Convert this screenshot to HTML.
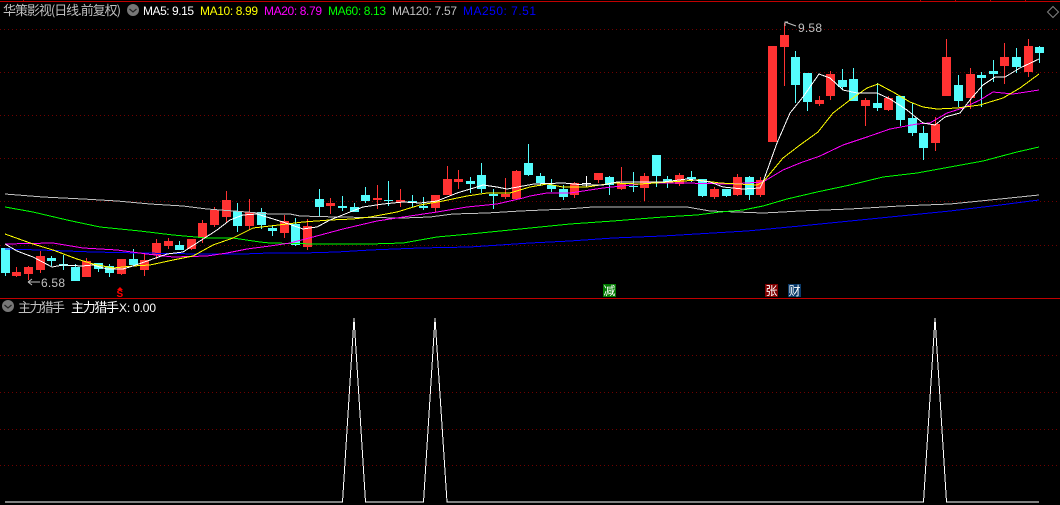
<!DOCTYPE html>
<html lang="zh">
<head>
<meta charset="utf-8">
<title>华策影视</title>
<style>
html,body{margin:0;padding:0;background:#000;width:1060px;height:505px;overflow:hidden}
svg{display:block}
text{font-family:"Liberation Sans","WenQuanYi Zen Hei","Noto Sans CJK SC",sans-serif;font-size:12px}
.cn{font-family:"WenQuanYi Zen Hei","Noto Sans CJK SC",sans-serif;font-size:13px}
.ma{fill:none;stroke-width:1;shape-rendering:crispEdges}
</style>
</head>
<body>
<svg width="1060" height="505" viewBox="0 0 1060 505" xmlns="http://www.w3.org/2000/svg">
<rect width="1060" height="505" fill="#000"/>
<g stroke="#700000" stroke-width="1" stroke-dasharray="1 3" shape-rendering="crispEdges">
<path d="M0 29.5H1060M0 72.5H1060M0 115.5H1060M0 158.5H1060M0 201.5H1060M0 245.5H1060M0 355.5H1060M0 392.5H1060M0 429.5H1060M0 465.5H1060"/>
</g>
<g fill="#c00000" shape-rendering="crispEdges">
<rect x="0" y="1" width="1060" height="1"/>
<rect x="23" y="0" width="1" height="2"/><rect x="920" y="0" width="1" height="2"/><rect x="955" y="0" width="1" height="2"/><rect x="990" y="0" width="1" height="2"/><rect x="1025" y="0" width="1" height="2"/>
<rect x="0" y="298" width="1060" height="1"/>
</g>
<path d="M1053 6.5L1058.5 12L1053 17.5L1047.5 12Z" fill="none" stroke="#808080" stroke-width="1"/>
<path fill="#ff3232" shape-rendering="crispEdges" d="
M12 272h9V276h-9zM16 267h1V277h-1z
M24 267h9V274h-9zM28 266h1V280h-1z
M36 256h9V270h-9zM40 251h1V273h-1z
M82 261h9V277h-9zM86 258h1V277h-1z
M117 259h9V274h-9zM121 259h1V275h-1z
M140 260h9V270h-9zM144 254h1V276h-1z
M152 243h9V255h-9zM156 239h1V259h-1z
M164 241h9V246h-9zM168 238h1V249h-1z
M187 239h9V249h-9zM191 239h1V250h-1z
M198 223h9V238h-9zM202 220h1V243h-1z
M210 210h9V225h-9zM214 207h1V227h-1z
M222 200h9V217h-9zM226 191h1V222h-1z
M245 212h9V226h-9zM249 199h1V230h-1z
M280 221h9V233h-9zM284 215h1V238h-1z
M303 226h9V247h-9zM307 219h1V250h-1z
M326 203h9V206h-9zM330 198h1V214h-1z
M373 198h9V200h-9zM377 185h1V209h-1z
M396 200h9V202h-9zM400 189h1V207h-1z
M431 195h9V208h-9zM435 195h1V212h-1z
M443 179h9V195h-9zM447 166h1V195h-1z
M454 179h9V182h-9zM458 170h1V189h-1z
M501 194h9V197h-9zM505 178h1V199h-1z
M512 171h9V199h-9zM516 170h1V199h-1z
M570 183h9V195h-9zM574 182h1V198h-1z
M594 173h9V180h-9zM598 173h1V183h-1z
M617 183h9V189h-9zM621 167h1V190h-1z
M640 176h9V188h-9zM644 173h1V201h-1z
M675 175h9V184h-9zM679 173h1V186h-1z
M710 189h9V197h-9zM714 187h1V199h-1z
M733 177h9V195h-9zM737 174h1V196h-1z
M756 180h9V195h-9zM760 177h1V197h-1z
M768 46h9V142h-9z
M780 35h9V47h-9zM784 23h1V86h-1z
M815 100h9V104h-9zM819 96h1V106h-1z
M826 74h9V96h-9zM830 71h1V100h-1z
M861 100h9V106h-9zM865 98h1V126h-1z
M884 98h9V110h-9zM888 96h1V111h-1z
M931 124h9V143h-9zM935 117h1V151h-1z
M942 57h9V96h-9zM946 39h1V96h-1z
M966 74h9V98h-9zM970 68h1V109h-1z
M1000 57h9V66h-9zM1004 43h1V84h-1z
M1024 46h9V72h-9zM1028 39h1V77h-1z"/>
<path fill="#54fcfc" shape-rendering="crispEdges" d="
M1 248h9V273h-9zM5 248h1V276h-1z
M47 258h9V261h-9zM51 256h1V266h-1z
M59 264h9V266h-9zM63 255h1V270h-1z
M71 267h9V281h-9zM75 264h1V281h-1z
M94 263h9V269h-9zM98 263h1V272h-1z
M105 266h9V273h-9zM109 264h1V277h-1z
M129 259h9V265h-9zM133 249h1V266h-1z
M175 245h9V250h-9zM179 241h1V250h-1z
M233 211h9V226h-9zM237 203h1V232h-1z
M257 212h9V225h-9zM261 208h1V229h-1z
M268 228h9V231h-9zM272 225h1V236h-1z
M291 224h9V245h-9zM295 218h1V246h-1z
M315 199h9V207h-9zM319 189h1V217h-1z
M338 206h9V208h-9zM342 196h1V211h-1z
M350 207h9V212h-9zM354 203h1V212h-1z
M361 195h9V201h-9zM365 187h1V203h-1z
M384 200h9V201h-9zM388 181h1V206h-1z
M408 201h9V203h-9zM412 195h1V207h-1z
M419 206h9V208h-9zM423 197h1V210h-1z
M466 181h9V184h-9zM470 177h1V193h-1z
M477 175h9V189h-9zM481 163h1V193h-1z
M489 194h9V196h-9zM493 189h1V209h-1z
M524 163h9V175h-9zM528 144h1V176h-1z
M536 176h9V183h-9zM540 173h1V186h-1z
M547 185h9V189h-9zM551 179h1V192h-1z
M559 189h9V197h-9zM563 185h1V200h-1z
M605 177h9V185h-9zM609 176h1V195h-1z
M629 186h9V187h-9zM633 172h1V192h-1z
M652 155h9V176h-9zM656 155h1V187h-1z
M663 179h9V183h-9zM667 176h1V188h-1z
M687 177h9V179h-9zM691 171h1V182h-1z
M698 179h9V196h-9zM702 179h1V197h-1z
M722 189h9V196h-9zM726 189h1V197h-1z
M745 177h9V195h-9zM749 176h1V200h-1z
M791 57h9V85h-9zM795 51h1V103h-1z
M803 73h9V102h-9zM807 73h1V111h-1z
M838 80h9V87h-9zM842 69h1V90h-1z
M849 79h9V101h-9zM853 68h1V101h-1z
M873 103h9V108h-9zM877 83h1V111h-1z
M896 96h9V120h-9zM900 96h1V126h-1z
M908 118h9V133h-9zM912 103h1V136h-1z
M919 133h9V148h-9zM923 126h1V160h-1z
M954 85h9V101h-9zM958 75h1V107h-1z
M977 75h9V78h-9zM981 72h1V107h-1z
M989 71h9V74h-9zM993 60h1V82h-1z
M1012 57h9V67h-9zM1016 48h1V73h-1z
M1035 47h9V53h-9zM1039 46h1V63h-1z"/>
<path fill="#fff" shape-rendering="crispEdges" d="M582 183h9V184h-9zM586 176h1V187h-1z"/>
<polyline class="ma" stroke="#c0c0c0" points="5,194 43,197 83,199 117,201 150,204 183,206 207,209 247,212 270,214 290,214 300,216 337,217 403,218 430,217 453,214 487,213 520,211 567,209 593,207 687,207 710,211 737,212 763,213 783,212 800,211 850,209 900,206 950,204 1000,199 1039,195"/>
<polyline class="ma" stroke="#0000ff" points="5,249 40,250 93,252 140,253 200,254 243,254 270,253 303,253 337,252 370,250 420,248 470,247 530,243 570,241 613,238 663,236 713,233 747,231 800,226 850,221 900,216 950,211 1000,205 1039,200"/>
<polyline class="ma" stroke="#00ff00" points="5,207 33,212 67,220 100,227 140,231 173,235 207,238 233,238 260,242 270,243 317,244 370,244 403,243 437,237 470,234 510,230 530,228 570,224 613,221 663,217 697,215 720,212 743,210 763,206 787,199 817,192 850,185 883,177 917,173 950,167 983,161 1017,152 1039,147"/>
<polyline class="ma" stroke="#ff00ff" points="5,244 53,243 83,248 117,250 147,254 173,257 207,256 227,253 247,249 270,246 290,243 313,237 343,229 377,221 410,216 437,212 467,207 497,204 523,198 530,196 547,193 570,193 603,188 650,183 683,183 730,184 763,182 783,170 800,163 820,156 843,145 867,137 890,129 917,124 930,123 947,113 963,108 980,100 993,92 1013,94 1039,90"/>
<polyline class="ma" stroke="#ffff00" points="5,234 33,244 53,250 77,259 93,264 113,268 133,266 150,265 173,260 193,256 213,245 233,238 253,228 270,226 287,224 303,222 330,220 353,219 370,217 397,212 420,205 443,201 467,196 487,193 510,193 530,187 547,184 563,187 587,187 613,183 640,184 670,182 697,180 720,183 757,185 763,182 783,158 800,145 818,132 833,113 850,100 867,88 878,84 893,92 910,102 923,107 937,109 957,108 980,105 1003,98 1020,88 1039,74"/>
<polyline class="ma" stroke="#ffffff" points="5,244 17,251 33,257 52,267 63,265 82,266 93,265 107,269 123,269 133,266 150,260 167,254 183,252 200,241 217,230 230,220 243,215 257,214 270,218 283,222 303,229 317,227 330,220 350,212 363,207 383,204 403,202 420,203 437,201 457,193 477,187 483,185 497,187 507,189 523,186 534,184 563,183 585,185 603,185 617,182 640,182 663,182 687,179 710,182 723,187 743,189 760,188 763,182 777,143 790,113 803,97 819,74 830,78 843,90 857,93 877,93 890,99 907,110 923,123 935,125 945,117 960,113 970,100 983,85 995,77 1005,77 1020,68 1039,59"/>
<path d="M28 282H40M28 282L32 279M28 282L32 285" stroke="#c0c0c0" fill="none"/>
<text x="41" y="287" fill="#c0c0c0" textLength="24" lengthAdjust="spacing">6.58</text>
<path d="M785 26V22H788M785 22L796 26" stroke="#c0c0c0" fill="none"/>
<text x="798" y="32" fill="#c0c0c0" textLength="24" lengthAdjust="spacing">9.58</text>
<rect x="603" y="284" width="13" height="13" fill="#007a00"/>
<text class="cn" x="603.5" y="295" fill="#fff" style="font-size:12px">减</text>
<rect x="765" y="284" width="13" height="13" fill="#800000"/>
<text class="cn" x="765.5" y="295" fill="#fff" style="font-size:12px">张</text>
<rect x="788" y="284" width="13" height="13" fill="#0a3a6a"/>
<text class="cn" x="788.5" y="295" fill="#fff" style="font-size:12px">财</text>
<path d="M120 287L123 290H117Z" fill="#ff0000"/>
<text x="116.5" y="297" fill="#ff0000" style="font-size:10px;font-weight:bold">S</text>
<text class="cn" x="3" y="15" fill="#c0c0c0" textLength="118" lengthAdjust="spacing">华策影视(日线.前复权)</text>
<circle cx="133" cy="10" r="6" fill="#777"/>
<path d="M129.5 9L133 12L136.5 9" stroke="#222" stroke-width="1.2" fill="none"/>
<text x="143" y="15" fill="#ffffff" textLength="51" lengthAdjust="spacing">MA5: 9.15</text>
<text x="200" y="15" fill="#ffff00" textLength="58" lengthAdjust="spacing">MA10: 8.99</text>
<text x="264" y="15" fill="#ff00ff" textLength="58" lengthAdjust="spacing">MA20: 8.79</text>
<text x="328" y="15" fill="#00ff00" textLength="58" lengthAdjust="spacing">MA60: 8.13</text>
<text x="392" y="15" fill="#c0c0c0" textLength="65" lengthAdjust="spacing">MA120: 7.57</text>
<text x="463" y="15" fill="#0000ff" textLength="73" lengthAdjust="spacing">MA250: 7.51</text>
<circle cx="8" cy="306" r="6" fill="#777"/>
<path d="M4.5 305L8 308L11.5 305" stroke="#222" stroke-width="1.2" fill="none"/>
<text class="cn" x="18" y="312" fill="#c0c0c0" textLength="47" lengthAdjust="spacing">主力猎手</text>
<text class="cn" x="71" y="312" fill="#ffffff" textLength="48" lengthAdjust="spacing">主力猎手</text>
<text x="119" y="312" fill="#ffffff" textLength="37" lengthAdjust="spacing">X: 0.00</text>
<polyline class="ma" stroke="#ffffff" points="5,502 342.5,502 354,318 365.5,502 423.5,502 435,318 447,502 923.5,502 935,318 946.5,502 1039,502"/>
</svg>
</body>
</html>
